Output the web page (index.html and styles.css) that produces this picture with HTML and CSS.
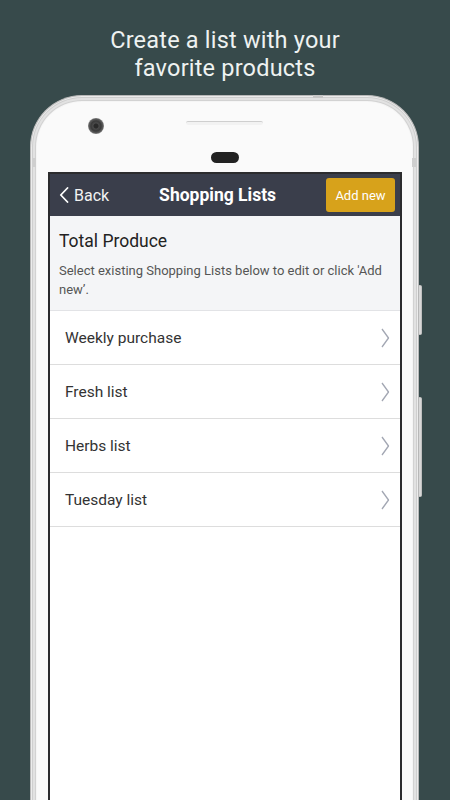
FILE: index.html
```html
<!DOCTYPE html>
<html lang="en">
<head>
<meta charset="utf-8">
<title>Shopping Lists</title>
<link rel="stylesheet" href="styles.css">
</head>
<body>
<h1 class="caption">Create a list with your<br>favorite products</h1>
<div class="phone">
  <span class="notch-top"></span>
  <span class="antenna antenna-left"></span>
  <span class="antenna antenna-right"></span>
  <span class="side-btn side-btn-1"></span>
  <span class="side-btn side-btn-2"></span>
  <div class="bezel">
    <div class="bezel-row">
      <span class="camera"></span>
      <span class="speaker"></span>
    </div>
    <span class="sensor"></span>
  </div>
  <div class="screen">
    <header class="navbar">
      <a class="back">
        <svg class="back-icon" width="10" height="16" viewBox="0 0 10 16"><path d="M8.5 1 L1.8 8 L8.5 15" fill="none" stroke="#ffffff" stroke-width="1.8" stroke-linecap="round" stroke-linejoin="round"/></svg>
        <span>Back</span>
      </a>
      <div class="nav-title">Shopping Lists</div>
      <button class="add-btn">Add new</button>
    </header>
    <section class="intro">
      <h2 class="intro-title">Total Produce</h2>
      <p class="intro-text">Select existing Shopping Lists below to edit or click 'Add new’.</p>
    </section>
    <ul class="lists">
      <li class="list-row"><span>Weekly purchase</span><svg class="chev" width="9" height="20" viewBox="0 0 9 20"><path d="M1 1 L7.5 10 L1 19" fill="none" stroke="#a3a7b3" stroke-width="1.3" stroke-linejoin="round"/></svg></li>
      <li class="list-row"><span>Fresh list</span><svg class="chev" width="9" height="20" viewBox="0 0 9 20"><path d="M1 1 L7.5 10 L1 19" fill="none" stroke="#a3a7b3" stroke-width="1.3" stroke-linejoin="round"/></svg></li>
      <li class="list-row"><span>Herbs list</span><svg class="chev" width="9" height="20" viewBox="0 0 9 20"><path d="M1 1 L7.5 10 L1 19" fill="none" stroke="#a3a7b3" stroke-width="1.3" stroke-linejoin="round"/></svg></li>
      <li class="list-row"><span>Tuesday list</span><svg class="chev" width="9" height="20" viewBox="0 0 9 20"><path d="M1 1 L7.5 10 L1 19" fill="none" stroke="#a3a7b3" stroke-width="1.3" stroke-linejoin="round"/></svg></li>
    </ul>
  </div>
</div>
</body>
</html>
```

FILE: styles.css
```css
* { box-sizing: border-box; }
html, body {
  margin: 0;
  padding: 0;
  height: 800px;
  overflow: hidden;
}
body {
  background: #374a4b;
  font-family: Roboto, "Liberation Sans", sans-serif;
}
.caption {
  margin: 0;
  padding-top: 26px;
  height: 95px;
  text-align: center;
  color: #eef2f1;
  font-weight: 400;
  font-size: 23.5px;
  line-height: 28px;
  letter-spacing: 0.2px;
}
.phone {
  position: relative;
  margin-left: 30px;
  width: 389px;
  height: 730px;
  background: #fafafa;
  border: 1px solid #b8b8b8;
  border-bottom: none;
  border-radius: 52px 52px 0 0;
  box-shadow: inset 0 0 0 1px #ececec, inset 0 0 0 2px #cfcfcf, inset 0 0 0 4px #e2e2e2, inset 0 0 0 5px #d2d2d2, inset 0 0 0 6px #f5f5f5;
}
.notch-top {
  position: absolute;
  top: -1px;
  left: 282px;
  width: 10px;
  height: 3px;
  background: #c6c6c6;
}
.antenna {
  position: absolute;
  top: 62px;
  width: 4px;
  height: 9px;
  background: #cfcfcf;
}
.antenna-left { left: 1px; }
.antenna-right { right: 2px; }
.side-btn {
  position: absolute;
  right: -4px;
  width: 3px;
  background: #d8d8d8;
  border: 1px solid #c0c0c0;
  border-left: none;
  border-radius: 0 2px 2px 0;
}
.side-btn-1 { top: 189px; height: 50px; }
.side-btn-2 { top: 301px; height: 100px; }
.bezel {
  height: 76px;
  display: flex;
  flex-direction: column;
  align-items: center;
}
.bezel-row {
  align-self: stretch;
  display: flex;
  align-items: center;
  padding: 22px 0 0 57px;
  height: 38px;
}
.camera {
  width: 16px;
  height: 16px;
  border-radius: 50%;
  background: radial-gradient(circle at 50% 50%, #2a2a2a 0 2px, #4a4a4a 3px, #3a3a3a 5px, #5c5c5c 7px, #8a8a8a 8px);
}
.speaker {
  margin-left: 82px;
  margin-top: -7px;
  width: 77px;
  height: 4px;
  border-radius: 2px;
  background: #f2f2f2;
  border-top: 1.5px solid #cfcfcf;
}
.sensor {
  margin-top: 18px;
  width: 28px;
  height: 11px;
  border-radius: 6px;
  background: #222222;
}
.screen {
  margin-left: 17px;
  width: 354px;
  height: 650px;
  background: #ffffff;
  border: 2px solid #2c2c2e;
  border-bottom: none;
}
.navbar {
  height: 42px;
  background: #3a3e4b;
  display: flex;
  align-items: center;
  padding: 0 5px 0 9px;
}
.back {
  display: flex;
  align-items: center;
  gap: 5px;
  color: #f2f2f2;
  font-size: 16px;
}
.back-icon { display: block; }
.nav-title {
  flex: 1;
  text-align: center;
  color: #ffffff;
  font-weight: 700;
  font-size: 17.5px;
}
.add-btn {
  width: 69px;
  height: 34px;
  border: none;
  border-radius: 3px;
  background: #d7a21b;
  color: #ffffff;
  font-family: Roboto, "Liberation Sans", sans-serif;
  font-size: 13px;
  padding: 0;
}
.intro {
  background: #f4f5f7;
  padding: 14px 12px 11px 9px;
  border-bottom: 1px solid #e2e3e6;
  height: 95px;
}
.intro-title {
  margin: 0;
  font-weight: 400;
  font-size: 17.5px;
  line-height: 22px;
  color: #222222;
}
.intro-text {
  margin: 9px 0 0;
  font-size: 13px;
  line-height: 19px;
  color: #555555;
}
.lists {
  list-style: none;
  margin: 0;
  padding: 0;
}
.list-row {
  height: 54px;
  display: flex;
  align-items: center;
  justify-content: space-between;
  padding: 0 10px 0 15px;
  border-bottom: 1px solid #dddddd;
  font-size: 15.5px;
  color: #333333;
}
.chev { display: block; }
```
